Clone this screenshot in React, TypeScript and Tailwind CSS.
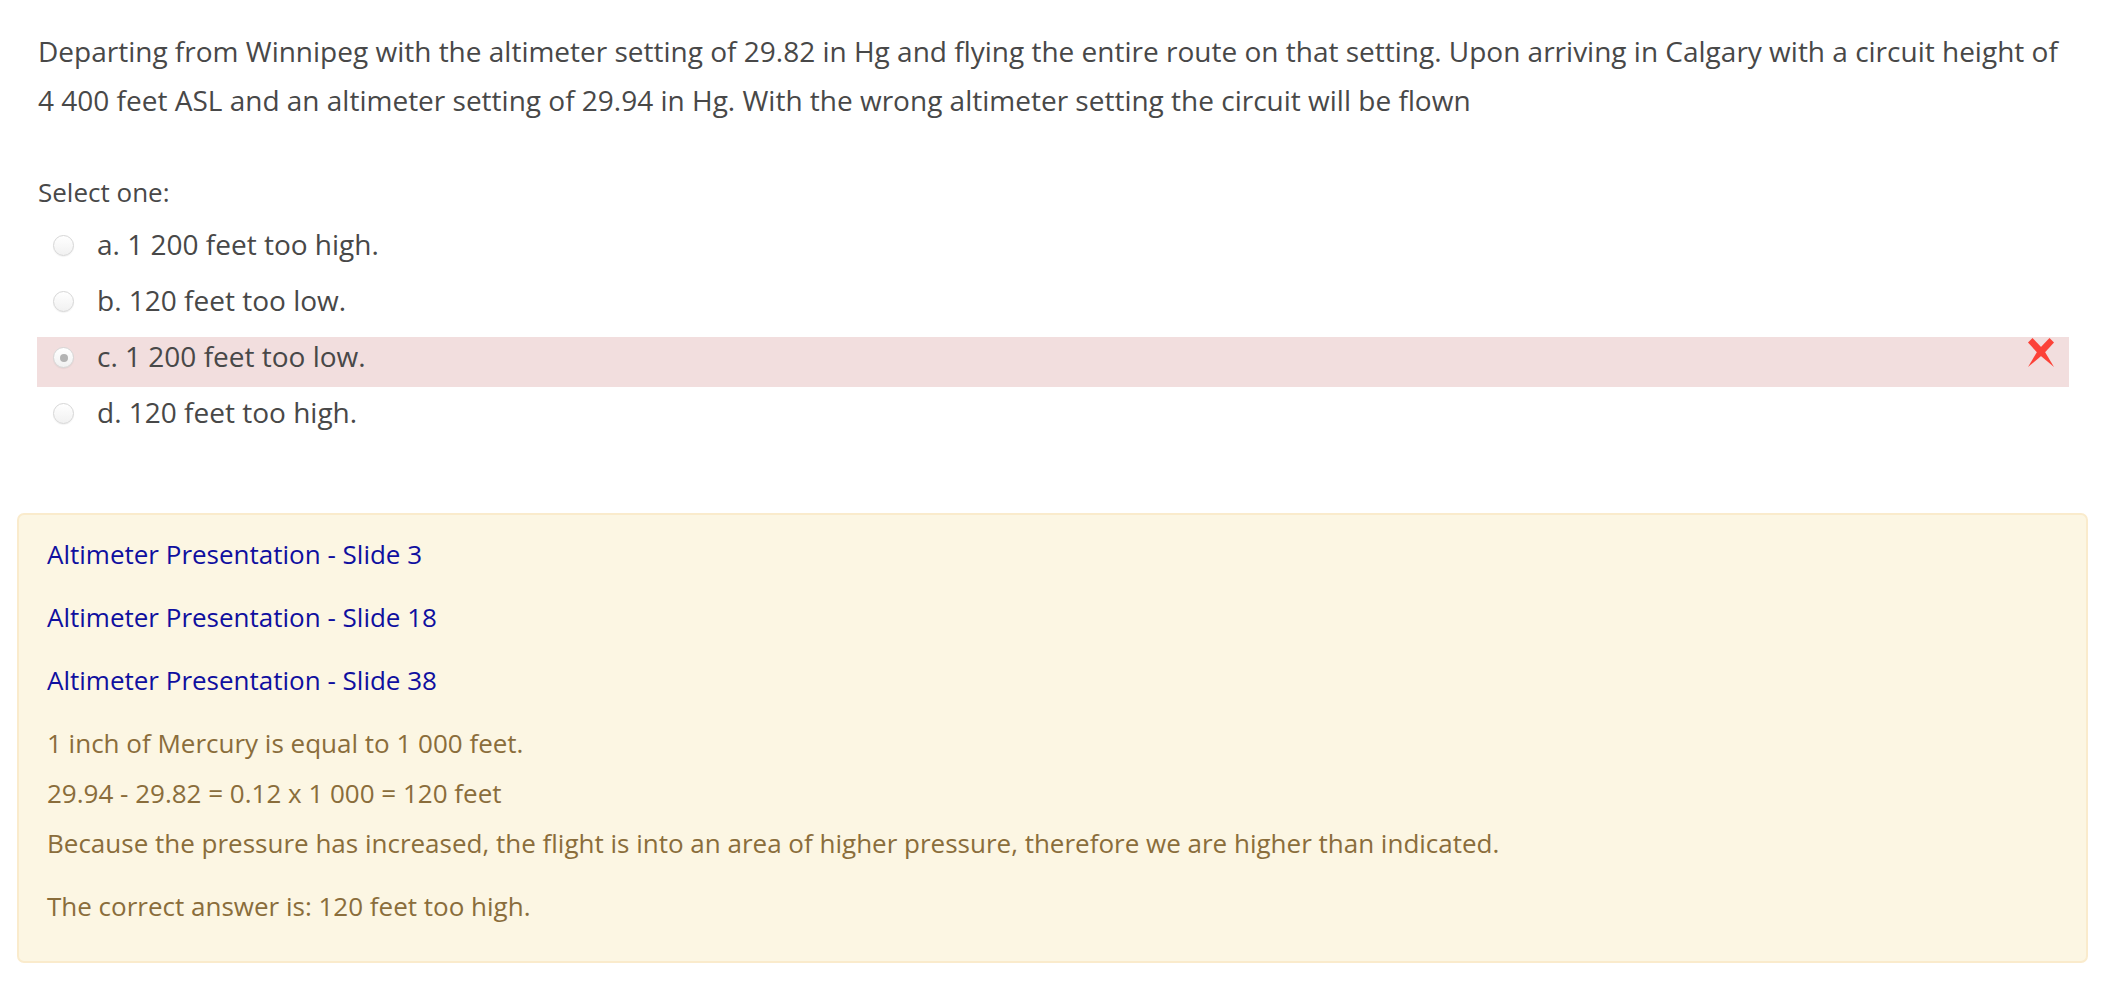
import React from "react";

type Option = {
  letter: string;
  text: string;
  selected?: boolean;
};

const options: Option[] = [
  { letter: "a.", text: "1 200 feet too high." },
  { letter: "b.", text: "120 feet too low." },
  { letter: "c.", text: "1 200 feet too low.", selected: true },
  { letter: "d.", text: "120 feet too high." },
];

function Radio({ checked }: { checked?: boolean }) {
  return (
    <span className="mt-[10px] flex h-[21px] w-[21px] shrink-0 items-center justify-center rounded-full border border-[#d6d6d6] bg-gradient-to-b from-white to-[#f1f1f1] shadow-[0_1px_1px_rgba(0,0,0,0.05)]">
      {checked && <span className="h-[8px] w-[8px] rounded-full bg-[#b3b3b3]" />}
    </span>
  );
}

function WrongMark() {
  // red cross, broad upper ends and pointed lower ends
  return (
    <svg width="26" height="29" viewBox="0 0 26 29" className="mt-[1px] shrink-0">
      <polygon points="0,4.5 4.5,0 15.5,11.5 26,29 10.5,16" fill="#fc4238" />
      <polygon points="26,4.5 21.5,0 10.5,11.5 0,29 15.5,16" fill="#fc4238" />
    </svg>
  );
}

export default function App() {
  return (
    <div className="min-h-screen bg-white font-['Open_Sans',sans-serif] text-[#484848]">
      <div className="ml-[37px] mr-[57px] pt-[27px]">
        {/* Question text */}
        <p className="pl-[1px] text-[28px] leading-[49px]">
          Departing from Winnipeg with the altimeter setting of 29.82 in Hg and flying the entire route on that
          setting. Upon arriving in Calgary with a circuit height of 4{"\u00a0"}400 feet ASL and an altimeter setting
          of 29.94 in Hg. With the wrong altimeter setting the circuit will be flown
        </p>

        <p className="mt-[48px] pl-[1px] text-[26px] leading-[39px]">Select one:</p>

        {/* Answers */}
        <div className="mt-[13px] flex flex-col gap-[6px]">
          {options.map((o) => (
            <div
              key={o.letter}
              className={`flex h-[50px] items-start justify-between pl-[16px] pr-[15px] ${
                o.selected ? "bg-[#f2dede]" : ""
              }`}
            >
              <div className="flex items-start">
                <Radio checked={o.selected} />
                <span className="ml-[23px] text-[28px] leading-[39px]">
                  {o.letter} {o.text}
                </span>
              </div>
              {o.selected && <WrongMark />}
            </div>
          ))}
        </div>
      </div>

      {/* Feedback */}
      <div className="ml-[17px] mr-[38px] mt-[70px] h-[450px] rounded-[7px] border-2 border-[#faebcc] bg-[#fcf6e3] pl-[28px] pt-[20px] text-[26px] leading-[39px] text-[#8a6d3b]">
        <p className="mb-[24px] text-[#0f0f9f]">Altimeter Presentation - Slide 3</p>
        <p className="mb-[24px] text-[#0f0f9f]">Altimeter Presentation - Slide 18</p>
        <p className="mb-[24px] text-[#0f0f9f]">Altimeter Presentation - Slide 38</p>
        <p className="mb-[11px]">1 inch of Mercury is equal to 1 000 feet.</p>
        <p className="mb-[11px]">29.94 - 29.82 = 0.12 x 1 000 = 120 feet</p>
        <p className="mb-[24px]">
          Because the pressure has increased, the flight is into an area of higher pressure, therefore we are higher
          than indicated.
        </p>
        <p>The correct answer is: 120 feet too high.</p>
      </div>
    </div>
  );
}
